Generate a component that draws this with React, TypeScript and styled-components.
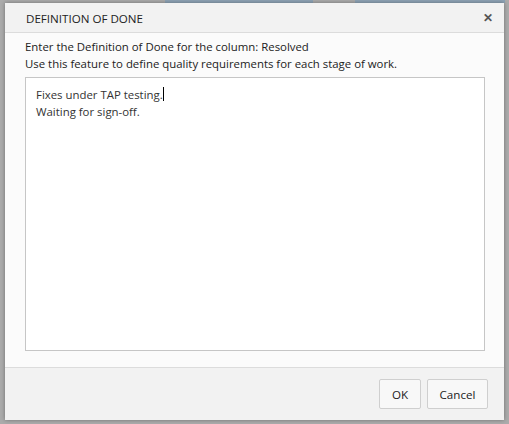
import React from 'react';
import styled, { createGlobalStyle } from 'styled-components';

const GlobalStyle = createGlobalStyle`
  html, body {
    margin: 0;
    padding: 0;
    width: 509px;
    height: 424px;
    overflow: hidden;
    background: #a9a9a9;
    font-family: 'Open Sans', 'Noto Sans', sans-serif;
  }
`;

const Backdrop = styled.div`
  position: relative;
  width: 509px;
  height: 424px;
  background: #ababab;
`;

const PageStrip = styled.div`
  display: flex;
  gap: 42px;
  padding-left: 165px;
  height: 3px;
`;

const PageTab = styled.div<{ $w: number }>`
  width: ${p => p.$w}px;
  height: 3px;
  background: #8ea3b5;
`;

const Dialog = styled.div`
  position: absolute;
  left: 5px;
  top: 3px;
  width: 499px;
  height: 417px;
  display: flex;
  flex-direction: column;
  background: #fbfbfb;
  box-shadow: 0 0 4px rgba(0, 0, 0, 0.35);
`;

const TitleBar = styled.div`
  box-sizing: border-box;
  height: 30px;
  display: flex;
  align-items: center;
  justify-content: space-between;
  padding: 1px 11px 0 21px;
  background: #f2f2f2;
  border-bottom: 1px solid #dcdcdc;
`;

const Title = styled.span`
  font-size: 11.6px;
  color: #222;
`;

const Close = styled.span`
  font-size: 12px;
  font-weight: bold;
  color: #555;
  line-height: 1;
`;

const Body = styled.div`
  flex: 1;
  display: flex;
  flex-direction: column;
  padding: 5px 19px 16px 20px;
`;

const Line = styled.div`
  font-size: 11.4px;
  line-height: 17px;
  color: #222;
`;

const Editor = styled.div`
  flex: 1;
  margin-top: 5px;
  background: #fff;
  border: 1px solid #c6c6c6;
  padding: 8px 10px;
  font-size: 11.4px;
  line-height: 17px;
  color: #333;
`;

const Caret = styled.span`
  display: inline-block;
  width: 1px;
  height: 14px;
  background: #000;
  vertical-align: -2px;
`;

const Footer = styled.div`
  height: 52px;
  display: flex;
  align-items: center;
  justify-content: flex-end;
  gap: 6px;
  padding: 0 16px 0 0;
  background: #f2f2f2;
  border-top: 1px solid #dcdcdc;
`;

const Button = styled.button<{ $w: number }>`
  width: ${p => p.$w}px;
  height: 30px;
  background: #f8f8f8;
  border: 1px solid #cfcfcf;
  border-radius: 2px;
  font-family: inherit;
  font-size: 11.6px;
  color: #222;
  padding: 0;
`;

export default function App() {
  return (
    <>
      <GlobalStyle />
      <Backdrop>
        <PageStrip>
          <PageTab $w={148} />
          <PageTab $w={150} />
        </PageStrip>
        <Dialog>
          <TitleBar>
            <Title>DEFINITION OF DONE</Title>
            <Close>✕</Close>
          </TitleBar>
          <Body>
            <Line>Enter the Definition of Done for the column: Resolved</Line>
            <Line>Use this feature to define quality requirements for each stage of work.</Line>
            <Editor>
              Fixes under TAP testing.<Caret />
              <br />
              Waiting for sign-off.
            </Editor>
          </Body>
          <Footer>
            <Button $w={42}>OK</Button>
            <Button $w={61}>Cancel</Button>
          </Footer>
        </Dialog>
      </Backdrop>
    </>
  );
}
